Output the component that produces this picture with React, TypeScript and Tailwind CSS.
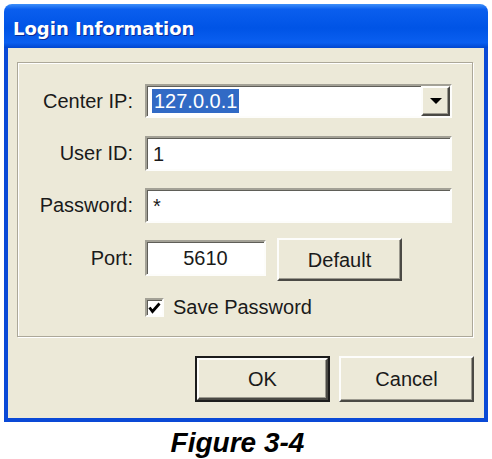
import React from "react";

const raised =
  "bg-[#ece9d8] border-2 border-t-[#fdfdfb] border-l-[#fdfdfb] border-r-[#4a4944] border-b-[#4a4944] shadow-[inset_-1px_-1px_0_#9c9a8f]";
const sunken =
  "bg-white border-2 border-t-[#a3a196] border-l-[#a3a196] border-r-[#fdfdfb] border-b-[#fdfdfb] shadow-[inset_1px_1px_0_#5f5e58]";

function Label({ children }: { children: React.ReactNode }) {
  return (
    <div className="w-[115px] text-right leading-[23px] whitespace-nowrap">{children}</div>
  );
}

export default function App() {
  return (
    <div className="w-[492px] h-[459px] bg-white overflow-hidden pt-[4px] pl-[4px] font-['Liberation_Sans',Arial,sans-serif] text-[20px] text-[#1a1a1a]">
      <div className="w-[484px]">
        {/* Title bar */}
        <div className="h-[44px] rounded-t-[8px] bg-[linear-gradient(180deg,#3d8ff9_0%,#0a5eee_12%,#0054e6_55%,#0a5ff0_88%,#0046cf_100%)] pl-[9px] pt-[14px]">
          <div className="font-['DejaVu_Sans',Verdana,sans-serif] font-bold text-[18px] leading-[22px] text-white [text-shadow:1px_1px_0_#0b2c96]">
            Login Information
          </div>
        </div>
        {/* Body */}
        <div className="h-[374px] border-x-4 border-b-4 border-[#0a49d6] bg-[#ece9d8] flex flex-col">
          {/* Group box */}
          <div className="mt-[14px] ml-[9px] w-[456px] h-[275px] border border-[#aca899] shadow-[1px_1px_0_#fff,inset_1px_1px_0_#fff] pt-[21px] flex flex-col">
            {/* Center IP */}
            <div className="flex items-center gap-[12px] h-[34px]">
              <Label>Center IP:</Label>
              <div className={`${sunken} w-[307px] h-[34px] flex items-center`}>
                <div className="flex-1 flex items-center pl-[5px]">
                  <span className="bg-[#316ac5] text-white leading-[24px] px-[2px]">127.0.0.1</span>
                </div>
                <div className={`${raised} w-[29px] h-full flex items-center justify-center`}>
                  <svg width="12" height="6" viewBox="0 0 12 6">
                    <polygon points="0,0 12,0 6,6" fill="#000" />
                  </svg>
                </div>
              </div>
            </div>
            {/* User ID */}
            <div className="mt-[18px] flex items-center gap-[12px] h-[35px]">
              <Label>User ID:</Label>
              <div className={`${sunken} w-[307px] h-[35px] flex items-center pl-[6px]`}>1</div>
            </div>
            {/* Password */}
            <div className="mt-[17px] flex items-center gap-[12px] h-[35px]">
              <Label>Password:</Label>
              <div className={`${sunken} w-[307px] h-[35px] flex items-center pl-[6px]`}>*</div>
            </div>
            {/* Port */}
            <div className="mt-[15px] flex items-start h-[43px]">
              <div className="mt-[2px] h-[36px] flex items-center gap-[12px]">
                <Label>Port:</Label>
                <div className={`${sunken} w-[121px] h-[36px] flex items-center justify-center`}>5610</div>
              </div>
              <button className={`${raised} ml-[11px] w-[125px] h-[43px] flex items-center justify-center`}>
                Default
              </button>
            </div>
            {/* Save password */}
            <div className="mt-[17px] ml-[127px] flex items-center gap-[9px] h-[19px]">
              <div className={`${sunken} w-[19px] h-[19px] flex items-center justify-center`}>
                <svg width="13" height="12" viewBox="0 0 13 12">
                  <polyline points="1.5,5.5 4.5,9.5 11.5,1.5" fill="none" stroke="#000" strokeWidth="2.8" />
                </svg>
              </div>
              <span className="leading-[23px]">Save Password</span>
            </div>
          </div>
          {/* Bottom buttons */}
          <div className="mt-[19px] flex justify-end gap-[9px] pr-[10px]">
            <div className="w-[135px] h-[46px] border-2 border-[#1c1c1c]">
              <button className={`${raised} w-full h-full flex items-center justify-center`}>OK</button>
            </div>
            <button className={`${raised} w-[135px] h-[46px] flex items-center justify-center`}>Cancel</button>
          </div>
        </div>
      </div>
      <div className="-ml-[4px] mt-[7px] pr-[17px] text-center font-bold italic text-[28px] leading-[28px] text-black">
        Figure 3-4
      </div>
    </div>
  );
}
